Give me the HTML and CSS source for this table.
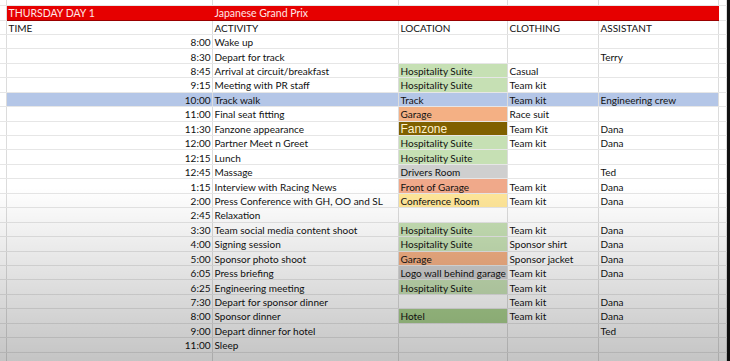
FILE: index.html
```html
<!DOCTYPE html>
<html>
<head>
<meta charset="utf-8">
<link rel="stylesheet" href="styles.css">
</head>
<body>
<div class="screen">
  <table class="sheet">
    <colgroup>
      <col class="c-gutter"><col class="c-time"><col class="c-act"><col class="c-loc"><col class="c-cloth"><col class="c-asst"><col class="c-extra">
    </colgroup>
    <tbody>
      <tr class="r-top"><td></td><td></td><td></td><td></td><td></td><td></td><td></td></tr>
      <tr class="r-title"><td></td><td class="title">THURSDAY DAY 1</td><td class="title" colspan="4">Japanese Grand Prix</td><td></td></tr>
      <tr><td></td><td>TIME</td><td>ACTIVITY</td><td>LOCATION</td><td>CLOTHING</td><td>ASSISTANT</td><td></td></tr>
      <tr><td></td><td class="t">8:00</td><td>Wake up</td><td></td><td></td><td></td><td></td></tr>
      <tr><td></td><td class="t">8:30</td><td>Depart for track</td><td></td><td></td><td>Terry</td><td></td></tr>
      <tr><td></td><td class="t">8:45</td><td>Arrival at circuit/breakfast</td><td class="green">Hospitality Suite</td><td>Casual</td><td></td><td></td></tr>
      <tr><td></td><td class="t">9:15</td><td>Meeting with PR staff</td><td class="green">Hospitality Suite</td><td>Team kit</td><td></td><td></td></tr>
      <tr class="blue"><td class="nb"></td><td class="t">10:00</td><td>Track walk</td><td>Track</td><td>Team kit</td><td>Engineering crew</td><td class="nb"></td></tr>
      <tr><td></td><td class="t">11:00</td><td>Final seat fitting</td><td class="orange">Garage</td><td>Race suit</td><td></td><td></td></tr>
      <tr><td></td><td class="t">11:30</td><td>Fanzone appearance</td><td class="brown">Fanzone</td><td>Team Kit</td><td>Dana</td><td></td></tr>
      <tr><td></td><td class="t">12:00</td><td>Partner Meet n Greet</td><td class="green">Hospitality Suite</td><td>Team kit</td><td>Dana</td><td></td></tr>
      <tr><td></td><td class="t">12:15</td><td>Lunch</td><td class="green">Hospitality Suite</td><td></td><td></td><td></td></tr>
      <tr><td></td><td class="t">12:45</td><td>Massage</td><td class="grey">Drivers Room</td><td></td><td>Ted</td><td></td></tr>
      <tr><td></td><td class="t">1:15</td><td>Interview with Racing News</td><td class="salmon">Front of Garage</td><td>Team kit</td><td>Dana</td><td></td></tr>
      <tr><td></td><td class="t">2:00</td><td>Press Conference with GH, OO and SL</td><td class="yellow">Conference Room</td><td>Team kit</td><td>Dana</td><td></td></tr>
      <tr><td></td><td class="t">2:45</td><td>Relaxation</td><td></td><td></td><td></td><td></td></tr>
      <tr><td></td><td class="t">3:30</td><td>Team social media content shoot</td><td class="green">Hospitality Suite</td><td>Team kit</td><td>Dana</td><td></td></tr>
      <tr><td></td><td class="t">4:00</td><td>Signing session</td><td class="green">Hospitality Suite</td><td>Sponsor shirt</td><td>Dana</td><td></td></tr>
      <tr><td></td><td class="t">5:00</td><td>Sponsor photo shoot</td><td class="orange">Garage</td><td>Sponsor jacket</td><td>Dana</td><td></td></tr>
      <tr><td></td><td class="t">6:05</td><td>Press briefing</td><td class="grey">Logo wall behind garage</td><td>Team kit</td><td>Dana</td><td></td></tr>
      <tr><td></td><td class="t">6:25</td><td>Engineering meeting</td><td class="green">Hospitality Suite</td><td>Team kit</td><td></td><td></td></tr>
      <tr><td></td><td class="t">7:30</td><td>Depart for sponsor dinner</td><td></td><td>Team kit</td><td>Dana</td><td></td></tr>
      <tr><td></td><td class="t">8:00</td><td>Sponsor dinner</td><td class="green2">Hotel</td><td>Team kit</td><td>Dana</td><td></td></tr>
      <tr><td></td><td class="t">9:00</td><td>Depart dinner for hotel</td><td></td><td></td><td>Ted</td><td></td></tr>
      <tr><td></td><td class="t">11:00</td><td>Sleep</td><td></td><td></td><td></td><td></td></tr>
      <tr><td></td><td></td><td></td><td></td><td></td><td></td><td></td></tr>
    </tbody>
  </table>
  <div class="edge"></div>
  <div class="shade"></div>
</div>
</body>
</html>
```

FILE: styles.css
```css
html, body {
  margin: 0;
  padding: 0;
  background: #ffffff;
}
.screen {
  position: relative;
  width: 730px;
  height: 361px;
  overflow: hidden;
  display: flex;
  align-items: flex-start;
  background: #ffffff;
}
.sheet {
  table-layout: fixed;
  border-collapse: collapse;
  width: 726px;
  flex: none;
  font-family: "Lato", "Liberation Sans", sans-serif;
  font-size: 10px;
  color: #111111;
}
.c-gutter { width: 6px; }
.c-time { width: 206px; }
.c-act { width: 186px; }
.c-loc { width: 109px; }
.c-cloth { width: 91px; }
.c-asst { width: 120px; }
.c-extra { width: 8px; }
.sheet td {
  height: 14.45px;
  padding: 1px 2px 0;
  box-sizing: border-box;
  border-right: 1px solid #dcdcdc;
  border-bottom: 1px solid #e6e6e6;
  white-space: nowrap;
  overflow: visible;
  line-height: 12px;
  vertical-align: middle;
}
.sheet td.t {
  text-align: right;
  padding-right: 1px;
}
.r-top td {
  height: 5px;
  padding: 0;
}
.r-title td {
  height: 15px;
}
.r-title td.title {
  background: #e60000;
  color: #ffe6e6;
  border-bottom: 1px solid #9a0000;
  border-right-color: #e60000;
  font-size: 10.5px;
}
.blue td {
  background: #b4c6e7;
}
.blue td.nb {
  background: transparent;
}
.green { background: #c6e0b4; }
.green2 { background: #a9d08e; }
.orange { background: #f4b084; }
.salmon { background: #f0a98a; }
.grey { background: #cfcfcf; }
.yellow { background: #ffe699; }
.sheet td.brown {
  background: #7f6000;
  color: #fff2cc;
  font-family: "Liberation Sans", sans-serif;
  font-size: 12px;
}
.edge {
  flex: none;
  width: 4px;
  height: 361px;
  background: #111111;
}
.shade {
  position: absolute;
  inset: 0;
  pointer-events: none;
  background: linear-gradient(to bottom, rgba(0,0,0,0) 0%, rgba(0,0,0,0) 52%, rgba(0,0,0,0.23) 100%);
}
```
